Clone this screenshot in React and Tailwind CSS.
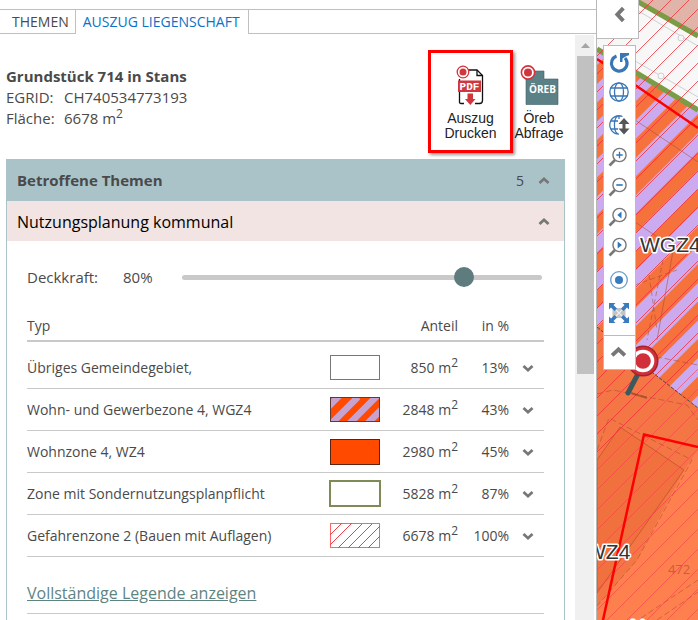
import React, { useState } from 'react';

const zones = [
  { name: 'Übriges Gemeindegebiet,', area: '850', percent: '13%', swatch: 'empty' },
  { name: 'Wohn- und Gewerbezone 4, WGZ4', area: '2848', percent: '43%', swatch: 'stripes' },
  { name: 'Wohnzone 4, WZ4', area: '2980', percent: '45%', swatch: 'solid' },
  { name: 'Zone mit Sondernutzungsplanpflicht', area: '5828', percent: '87%', swatch: 'outline' },
  { name: 'Gefahrenzone 2 (Bauen mit Auflagen)', area: '6678', percent: '100%', swatch: 'hatch' },
];

const chevrons = {
  up: 'M1.5 8 6 3.8 10.500 8',
  down: 'M1.5 4 6 8.200 10.500 4',
  left: 'M8 1.500 3.800 6 8 10.500',
};

const Chevron = ({ direction, className = 'size-3' }) => (
  <svg viewBox="0 0 12 12" className={`text-[#777] ${className}`}>
    <path d={chevrons[direction]} fill="none" stroke="currentColor" strokeWidth="2.800" />
  </svg>
);

const Swatch = ({ kind }) => (
  <svg width="52" height="28" viewBox="-1 -1 52 28" className="block">
    {kind === 'empty' && (
      <rect x="0.5" y="0.5" width="49" height="24" fill="#fff" stroke="#777" />
    )}
    {kind === 'stripes' && (
      <>
        <rect width="50" height="25" fill="#ff4a00" />
        <path d="M-9 17 11 -3M-2 30 28 0M16 30 48 -2M34 30 62 2" stroke="#c8a2cc" strokeWidth="6.600" />
        <rect x="0.5" y="0.5" width="49" height="24" fill="none" stroke="#5c3a35" />
        <path d="M-1 -1H51V27H-1ZM0 0V25H50V0Z" fill="#fff" fillRule="evenodd" />
      </>
    )}
    {kind === 'solid' && (
      <rect x="0.5" y="0.5" width="49" height="25" fill="#ff4a00" stroke="#5a2410" />
    )}
    {kind === 'outline' && (
      <rect x="0" y="0" width="50" height="25" fill="#fff" stroke="#7f8b57" strokeWidth="2" />
    )}
    {kind === 'hatch' && (
      <>
        <rect x="0.5" y="0.5" width="49" height="24" fill="#fff" stroke="#ff6464" />
        <path
          d="M0 12 12 0M0 22 22 0M8 25 32 1M18 25 42 1M28 25 50 3M38 25 50 13"
          fill="none"
          stroke="#f03c46"
          strokeWidth="1"
        />
      </>
    )}
  </svg>
);

const PdfIcon = () => (
  <svg width="40" height="40" viewBox="0 0 40 40">
    <path d="M13 38.500H10Q8.500 38.500 8.500 37V14M24 38.500H28.500Q31.500 38.500 31.500 35.500V10.500L26 5H17" fill="none" stroke="#111" strokeWidth="1.300" />
    <path d="M26 5V10.500H31.500" fill="none" stroke="#111" strokeWidth="1.300" />
    <rect x="7" y="15.500" width="23" height="11.500" fill="#d1353d" />
    <text x="18.500" y="24.500" textAnchor="middle" fontFamily="Liberation Mono, monospace" fontWeight="700" fontSize="11" fill="#fff">PDF</text>
    <path d="M16.500 28.500H22V34H24.500L19.300 40 14 34H16.500Z" fill="#d1353d" />
    <circle cx="12" cy="7" r="5.800" fill="#fff" stroke="#d1353d" strokeWidth="1.300" />
    <circle cx="12" cy="7" r="3.500" fill="#d1353d" />
  </svg>
);

const OerebIcon = () => (
  <svg width="40" height="40" viewBox="0 0 40 40">
    <path d="M7 6H25V14H39V39.500H7Z" fill="#5b8086" stroke="#3f6066" strokeWidth="0.600" />
    <text x="23.500" y="27.500" textAnchor="middle" fontFamily="Open Sans, sans-serif" fontWeight="700" fontSize="10" fill="#fff">ÖREB</text>
    <circle cx="9" cy="7.500" r="6.600" fill="#fff" stroke="#d1353d" strokeWidth="1.600" />
    <circle cx="9" cy="7.500" r="4" fill="#d1353d" />
  </svg>
);

const Lens = ({ children }) => (
  <>
    <path d="M6 13 0.500 18.500" stroke="#777" strokeWidth="2.600" />
    <circle cx="10.500" cy="8" r="6.600" fill="#fff" stroke="#777" strokeWidth="1.400" />
    {children}
  </>
);

const tools = [
  {
    label: 'Aktualisieren',
    height: 'h-8',
    icon: (
      <>
        <path d="M7.500 4A7.800 7.800 0 1 0 16 6" fill="none" stroke="#3a76b5" strokeWidth="3.200" />
        <path d="M11 1H20V3.200L17.500 4 13.500 6.500V10H11Z" fill="#3a76b5" />
      </>
    ),
  },
  {
    label: 'Ganze Karte',
    height: 'h-[30px]',
    icon: (
      <g fill="none" stroke="#3a76b5" strokeWidth="1.300">
        <circle cx="10" cy="9" r="9.200" />
        <ellipse cx="10" cy="9" rx="4.500" ry="9.200" />
        <path d="M1.500 5H18.500M1.500 13H18.500" />
      </g>
    ),
  },
  {
    label: 'Massstab',
    height: 'h-[34px]',
    icon: (
      <>
        <g fill="none" stroke="#3a76b5" strokeWidth="1.300">
          <path d="M13.500 1.500A9.200 9.200 0 1 0 10 19.200M9 1A4.500 9.200 0 0 0 9 19M10 1V4M1.500 6H9M1.500 14H9" />
        </g>
        <path d="M15 3 20.500 9H16.500V13.500H20.500L15 19.500 9.500 13.500H13.500V9H9.500Z" fill="#555" />
      </>
    ),
  },
  {
    label: 'Vergrössern',
    height: 'h-[30px]',
    icon: <Lens><path d="M7.300 8H13.700M10.500 4.800V11.200" stroke="#2f74bd" strokeWidth="1.300" /></Lens>,
  },
  {
    label: 'Verkleinern',
    height: 'h-[30px]',
    icon: <Lens><path d="M7.300 8H13.700" stroke="#2f74bd" strokeWidth="1.600" /></Lens>,
  },
  {
    label: 'Vorherige Ansicht',
    height: 'h-[30px]',
    icon: <Lens><path d="M12.500 4.500V11.500L8.300 8Z" fill="#2f74bd" /></Lens>,
  },
  {
    label: 'Nächste Ansicht',
    height: 'h-[30px]',
    icon: <Lens><path d="M8.700 4.500V11.500L12.900 8Z" fill="#2f74bd" /></Lens>,
  },
  {
    label: 'Standort',
    height: 'h-[34px]',
    icon: (
      <>
        <circle cx="10" cy="11" r="8.300" fill="none" stroke="#6a9ac8" strokeWidth="1.300" />
        <circle cx="10" cy="11" r="4" fill="#3a7abf" />
      </>
    ),
  },
  {
    label: 'Vollbild',
    height: 'h-[34px]',
    icon: (
      <>
        <rect x="3.500" y="5" width="13" height="10" fill="#c4c4c4" />
        <path d="M7 7 13 13M13 7 7 13" stroke="#eee" strokeWidth="1.200" />
        <g fill="#3a7abf">
          <path d="M0 0H6.500L4.500 2 8 5.500 5.500 8 2 4.500 0 6.500Z" />
          <path d="M20 0V6.500L18 4.500 14.500 8 12 5.500 15.500 2 13.500 0Z" />
          <path d="M0 20V13.500L2 15.500 5.500 12 8 14.500 4.500 18 6.500 20Z" />
          <path d="M20 20H13.500L15.500 18 12 14.500 14.500 12 18 15.500 20 13.500Z" />
        </g>
      </>
    ),
  },
];

// 45 degree lines: each one meets the left edge of the map at y = start + i * step
const diagonals = (start, step, count) =>
  Array.from({ length: count }, (_, i) => `M-10 ${start + i * step + 10}l130 -130`).join('');

const ZoneMap = () => (
  <svg
    className="block h-full w-full"
    viewBox="0 0 101 620"
    preserveAspectRatio="xMinYMin slice"
    role="img"
    aria-label="Zonenplan"
  >
    <defs>
      <clipPath id="wgz">
        <path d="M0 48 101 110V408L56 373 0 327Z" />
      </clipPath>
    </defs>
    <rect width="101" height="620" fill="#f7f7f7" />
    <path d="M38 0H101V36Z" fill="#e0b4a8" />
    <g clipPath="url(#wgz)">
      <rect width="101" height="410" fill="#ccaaf0" />
      <path d={diagonals(74.5, 37.5, 12)} stroke="#f5723c" strokeWidth="13.500" />
    </g>
    <path d="M0 327 56 373 101 408V620H0Z" fill="#f57645" />
    <path d="M101 450 87 470 40 560 0 606V620H101Z" fill="#ff804f" />
    <path d="M0 460 23 427 87 470 0 593Z" fill="#f1713e" stroke="#c8562e" strokeWidth="0.900" />
    <path d="M38 9 101 46M38 61 101 97" stroke="#cfcfcf" fill="none" />
    <circle cx="84" cy="38" r="3" fill="#f7f7f7" stroke="#cfcfcf" />
    <circle cx="64" cy="76" r="3" fill="#f7f7f7" stroke="#cfcfcf" />
    <path d="M38 0 101 36M0 49 101 110" stroke="#7a9c45" strokeWidth="5" />
    <g fill="none" stroke="#a0452c" strokeOpacity="0.550" strokeWidth="0.900">
      <path d="M38 120 101 162M38 222 62 238M78 240 60 340" />
      <path d="M66 260 50 340M38 285 80 270M52 275 60 330" strokeDasharray="5 3" />
      <path d="M0 394 16 390 90 405 101 420M50 355 101 365M0 450 12 418 95 460 40 560 0 606M44 618 101 580M60 620 101 592" strokeDasharray="6 3" />
    </g>
    <path d="M0 327 56 373 101 408" fill="none" stroke="#4a3a3a" strokeWidth="0.900" strokeDasharray="4 1" />
    <path d={diagonals(2, 18, 26)} stroke="#f0303a" strokeWidth="0.800" />
    <path d={diagonals(470, 20, 14)} stroke="#f83a48" strokeWidth="0.800" opacity="0.700" />
    <path d="M0 59 101 128" stroke="#ff0000" strokeWidth="2.500" />
    <path d="M6 620 47 434.500 101 447" fill="none" stroke="#ff0000" strokeWidth="2.500" />
    <g fontFamily="Liberation Sans, sans-serif" fontSize="21" fill="#333" stroke="#fff" strokeWidth="3" paintOrder="stroke" strokeLinejoin="round">
      <text x="43" y="252">WGZ4</text>
      <text x="-11" y="559">WZ4</text>
      <text x="33" y="634">N</text>
    </g>
    <text x="71" y="574" fontFamily="Open Sans, sans-serif" fontSize="13" fill="#c85f3a">472</text>
    <path d="M34 393 50 398" stroke="#7a3a22" strokeWidth="2" opacity="0.500" />
    <path d="M43 370 31 393" stroke="#3c5a5c" strokeWidth="5" strokeLinecap="round" />
    <circle cx="46" cy="361" r="15.500" fill="#a5222c" />
    <circle cx="46" cy="361" r="14" fill="#d1303a" />
    <circle cx="46" cy="361" r="11.300" fill="#fff" />
    <circle cx="46" cy="361" r="7.800" fill="#d1303a" />
  </svg>
);

const App = () => {
  const [opacity, setOpacity] = useState(80);

  return (
    <div className="grid h-screen grid-cols-[minmax(0,597px)_minmax(101px,1fr)] overflow-hidden bg-white font-['Open_Sans',sans-serif] text-sm text-[#4a4a4a]">
      <section className="flex min-h-0 flex-col border-r border-[#b8b8b8] pt-[9px]">
        <nav className="flex h-[25px] shrink-0 border-t border-[#c0c0c0] leading-6">
          <button className="border-r border-b border-[#c0c0c0] pr-[6px] pl-3">THEMEN</button>
          <button className="border-r border-[#c0c0c0] pr-2 pl-[7px] text-[#0a72c8]">AUSZUG LIEGENSCHAFT</button>
          <div className="flex-1 border-b border-[#c0c0c0]" />
        </nav>

        <div className="flex min-h-0 flex-1">
          <div className="flex min-w-0 flex-1 flex-col overflow-hidden pr-[10px] pl-[6px]">
            <div className="flex h-[125px] shrink-0 pt-4">
              <div className="flex-1 pt-4 text-[15px] leading-[21px]">
                <h1 className="font-bold">Grundstück 714 in Stans</h1>
                <dl className="grid grid-cols-[58px_1fr]">
                  <dt>EGRID:</dt>
                  <dd>CH740534773193</dd>
                  <dt>Fläche:</dt>
                  <dd>6678 m<sup className="text-xs">2</sup></dd>
                </dl>
              </div>
              <div className="flex items-start font-['Liberation_Sans',sans-serif] text-sm leading-[15px] text-[#222]">
                <button className="flex h-[103px] w-[85px] flex-col items-center border-[3px] border-[#ff0000] pt-3 shadow-[2px_2px_3px_rgba(0,0,0,0.4)]">
                  <PdfIcon />
                  <span className="mt-[6px]">Auszug<br />Drucken</span>
                </button>
                <button className="flex w-[52px] flex-col items-center pt-[15px]">
                  <OerebIcon />
                  <span className="mt-[6px]">Öreb<br />Abfrage</span>
                </button>
              </div>
            </div>

            <div className="flex-1 border-x border-[#a9c3c9]">
              <h2>
                <button className="flex h-[42px] w-full items-center bg-[#a9c3c9] pt-[2px] pr-[14px] pl-[10px] text-left">
                  <span className="flex-1 text-[15px] font-bold">Betroffene Themen</span>
                  <span className="mr-[14px]">5</span>
                  <Chevron direction="up" />
                </button>
              </h2>
              <h3>
                <button className="flex h-10 w-full items-center bg-[#f1e4e2] pt-[2px] pr-[14px] pl-[10px] text-left">
                  <span className="flex-1 text-base font-medium text-black">Nutzungsplanung kommunal</span>
                  <Chevron direction="up" />
                </button>
              </h3>

              <div className="px-5">
                <div className="flex h-[73px] items-center">
                  <label htmlFor="deckkraft" className="w-24 text-[15px]">Deckkraft:</label>
                  <output htmlFor="deckkraft" className="w-[59px] text-[15px]">{opacity}%</output>
                  <input
                    id="deckkraft"
                    type="range"
                    value={opacity}
                    onChange={(e) => setOpacity(e.target.value)}
                    className="mr-[2px] h-5 min-w-0 flex-1 appearance-none bg-transparent [&::-webkit-slider-runnable-track]:h-[5px] [&::-webkit-slider-runnable-track]:rounded-full [&::-webkit-slider-runnable-track]:bg-[#c9c9c9] [&::-webkit-slider-thumb]:-mt-2 [&::-webkit-slider-thumb]:size-5 [&::-webkit-slider-thumb]:appearance-none [&::-webkit-slider-thumb]:rounded-full [&::-webkit-slider-thumb]:bg-[#5e7b7d]"
                  />
                </div>

                <table className="w-full table-fixed border-collapse">
                  <colgroup>
                    <col />
                    <col className="w-[52px]" />
                    <col className="w-[77px]" />
                    <col className="w-[51px]" />
                    <col className="w-[35px]" />
                  </colgroup>
                  <thead>
                    <tr className="h-[27px] border-b-2 border-[#c9c9c9]">
                      <th className="pb-[2px] text-left font-normal" colSpan={2}>Typ</th>
                      <th className="pb-[2px] text-right font-normal">Anteil</th>
                      <th className="pb-[2px] text-right font-normal">in %</th>
                      <th />
                    </tr>
                  </thead>
                  <tbody>
                    {zones.map((zone) => (
                      <tr key={zone.name} className="h-[42px] border-b border-[#c9c9c9] first:h-[47px] first:[&>td]:pt-[6px]">
                        <td className="pt-[2px]">{zone.name}</td>
                        <td className="pt-[2px]"><Swatch kind={zone.swatch} /></td>
                        <td className="pt-[2px] text-right">
                          {zone.area} m<sup className="text-xs">2</sup>
                        </td>
                        <td className="pt-[2px] text-right">{zone.percent}</td>
                        <td className="pt-[2px]">
                          <button className="ml-[13px] flex" aria-label={zone.name}>
                            <Chevron direction="down" />
                          </button>
                        </td>
                      </tr>
                    ))}
                  </tbody>
                </table>

                <div className="border-b border-[#c9c9c9] pt-[26px] pb-[10px] text-base leading-5">
                  <a href="#legende" className="text-[#5e8482] underline">Vollständige Legende anzeigen</a>
                </div>
              </div>
            </div>
          </div>

          <div className="flex w-[21px] shrink-0 flex-col items-center pt-px pr-[2px]">
            <div className="flex w-full flex-1 flex-col items-end bg-[#f0f0f0]">
              <svg viewBox="0 0 17 21" className="h-[21px] w-[17px]">
                <path d="M4 13 8.500 8 13 13Z" fill="#a5a5a5" />
              </svg>
              <div className="h-[318px] w-[17px] bg-[#c1c1c1]" />
            </div>
          </div>
        </div>
      </section>

      <main className="relative min-w-0 overflow-hidden">
        <ZoneMap />
        <div className="absolute top-0 left-0 flex flex-col items-start">
          <button aria-label="Panel schliessen" className="flex h-[39px] w-[42px] items-start justify-center border-r border-b border-[#bbb] bg-white pt-[6px] pl-[6px]">
            <Chevron direction="left" className="size-[17px]" />
          </button>
          <div className="mt-[6px] ml-[6px] flex w-[33px] flex-col border border-[#bbb] bg-white">
            {tools.map((tool) => (
              <button key={tool.label} aria-label={tool.label} className={`flex items-center pl-[5px] ${tool.height}`}>
                <svg width="20" height="20" viewBox="0 0 20 20" className="overflow-visible">
                  {tool.icon}
                </svg>
              </button>
            ))}
            <button aria-label="Einklappen" className="mt-[5px] flex h-[34px] items-center border-t border-[#bbb] pl-[6px]">
              <Chevron direction="up" className="size-[17px]" />
            </button>
          </div>
        </div>
      </main>
    </div>
  );
};

export default App;
